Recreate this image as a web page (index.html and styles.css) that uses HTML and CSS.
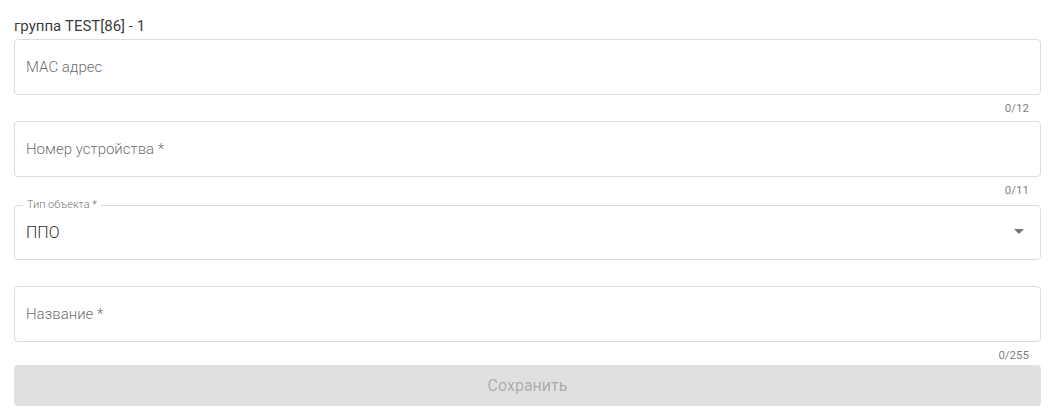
FILE: index.html
```html
<!DOCTYPE html>
<html lang="ru">

<head>
    <meta charset="UTF-8">
    <meta name="viewport" content="width=device-width, initial-scale=1.0">
    <title>Устройство</title>
    <link rel="stylesheet" href="styles.css">
</head>

<body>
    <div class="form">
        <p class="title">группа TEST[86] - 1</p>

        <div class="group">
            <div class="field">
                <span class="placeholder">MAC адрес</span>
            </div>
            <div class="helper">0/12</div>
        </div>

        <div class="group">
            <div class="field">
                <span class="placeholder">Номер устройства *</span>
            </div>
            <div class="helper">0/11</div>
        </div>

        <div class="group select-group">
            <div class="field select">
                <fieldset class="outline">
                    <legend>Тип объекта *</legend>
                </fieldset>
                <span class="value">ППО</span>
                <svg class="arrow" viewBox="0 0 24 24" width="24" height="24">
                    <path d="M7 10l5 5 5-5z"></path>
                </svg>
            </div>
            <div class="helper"></div>
        </div>

        <div class="group last">
            <div class="field">
                <span class="placeholder">Название *</span>
            </div>
            <div class="helper">0/255</div>
        </div>

        <button class="save" disabled>Сохранить</button>
    </div>
</body>

</html>
```

FILE: styles.css
```css
body {
    margin: 0;
    background-color: #fff;
    font-family: Roboto, "Noto Sans", sans-serif;
}

.form {
    display: flex;
    flex-direction: column;
    padding: 16px 10px 0 14px;
}

.title {
    margin: 0 0 3px;
    font-size: 15px;
    line-height: 20px;
    color: rgba(0, 0, 0, 0.8);
}

.group {
    margin-bottom: 3px;
}

.select-group {
    padding-top: 1px;
}

.group.last {
    margin-bottom: 0;
}

.field {
    position: relative;
    box-sizing: border-box;
    height: 56px;
    border: 1px solid #dcdcdc;
    border-radius: 4px;
    display: flex;
    align-items: center;
    padding: 0 12px 0 11px;
}

.placeholder {
    font-size: 15px;
    font-weight: 300;
    color: rgba(0, 0, 0, 0.62);
}

.helper {
    height: 20px;
    margin-top: 3px;
    padding-right: 12px;
    text-align: right;
    font-size: 11.5px;
    line-height: 20px;
    color: rgba(0, 0, 0, 0.55);
}

.field.select {
    border: none;
}

.outline {
    position: absolute;
    top: -5px;
    left: 0;
    right: 0;
    bottom: 0;
    margin: 0;
    padding: 0 8px;
    border: 1px solid #dcdcdc;
    border-radius: 4px;
    pointer-events: none;
}

.outline legend {
    padding: 0 4px;
    font-size: 11px;
    font-weight: 300;
    line-height: 12px;
    color: rgba(0, 0, 0, 0.62);
}

.value {
    padding-left: 1px;
    font-size: 16px;
    font-weight: 300;
    color: rgba(0, 0, 0, 0.87);
}

.arrow {
    position: absolute;
    right: 10px;
    top: 15px;
    fill: rgba(0, 0, 0, 0.54);
}

.save {
    height: 41px;
    border: none;
    border-radius: 4px;
    background-color: #e0e0e0;
    color: rgba(0, 0, 0, 0.26);
    font-family: Roboto, "Noto Sans", sans-serif;
    font-size: 16px;
    font-weight: 400;
}
```
